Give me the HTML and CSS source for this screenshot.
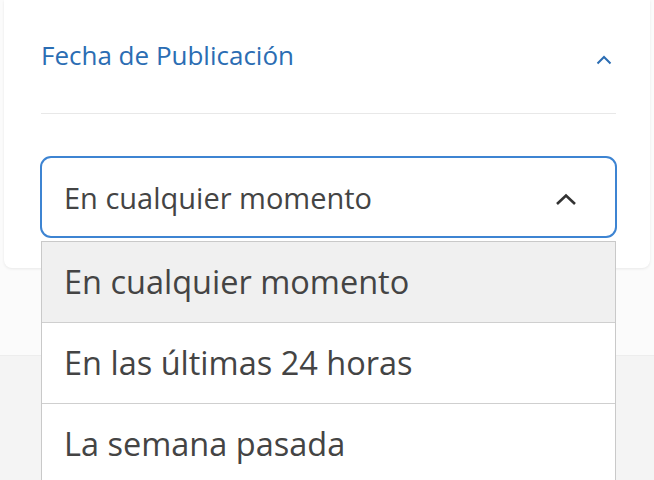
FILE: index.html
```html
<!DOCTYPE html>
<html lang="es">
<head>
    <meta charset="UTF-8">
    <meta name="viewport" content="width=device-width, initial-scale=1.0">
    <title>Filtros</title>
    <link rel="stylesheet" href="styles.css">
</head>
<body>
    <div class="card">
        <div class="card-header">
            <span class="card-title">Fecha de Publicación</span>
            <svg class="chevron chevron-blue" width="16" height="10" viewBox="0 0 16 10">
                <path d="M1.5 8.5 L8 2 L14.5 8.5" fill="none" stroke="currentColor" stroke-width="2"/>
            </svg>
        </div>
        <div class="select-wrap">
            <div class="select">
                <span>En cualquier momento</span>
                <svg class="chevron chevron-dark" width="22" height="13" viewBox="0 0 22 13">
                    <path d="M2 11 L11 2.5 L20 11" fill="none" stroke="currentColor" stroke-width="2.6"/>
                </svg>
            </div>
            <ul class="options">
                <li class="active">En cualquier momento</li>
                <li>En las últimas 24 horas</li>
                <li>La semana pasada</li>
            </ul>
        </div>
    </div>
    <div class="spacer"></div>
    <div class="footer"></div>
</body>
</html>
```

FILE: styles.css
```css
* {
    box-sizing: border-box;
}

html {
    overflow: hidden;
}

body {
    margin: 0;
    background: #fbfbfb;
    font-family: "Open Sans", Lato, "Noto Sans", sans-serif;
    color: #444;
}

.card {
    margin: 0 4px;
    padding: 0 33px 30px 36px;
    background: #fff;
    border-radius: 0 0 8px 8px;
    box-shadow: 0 1px 3px rgba(0, 0, 0, 0.08);
}

.card-header {
    height: 114px;
    margin: 0 1px 42px;
    display: flex;
    align-items: center;
    justify-content: space-between;
    border-bottom: 1px solid #e8e8e8;
    padding-bottom: 4px;
}

.card-title {
    font-size: 26px;
    color: #2b6db3;
}

.chevron-blue {
    color: #2b6db3;
    margin-right: 4px;
    margin-top: 10px;
}

.select-wrap {
    position: relative;
}

.select {
    height: 82px;
    display: flex;
    align-items: center;
    justify-content: space-between;
    padding: 0 38px 0 22px;
    border: 2px solid #3d84d2;
    border-radius: 11px;
    font-size: 29px;
}

.chevron-dark {
    color: #333;
    margin-top: 4px;
}

.options {
    position: absolute;
    top: 85px;
    left: 1px;
    right: 1px;
    margin: 0;
    padding: 0;
    list-style: none;
    background: #fff;
    border: 1px solid #c9c9c9;
    border-bottom: none;
}

.options li {
    height: 81px;
    display: flex;
    align-items: center;
    padding: 0 22px;
    padding-bottom: 2px;
    font-size: 32.5px;
    border-bottom: 1px solid #cfcfcf;
}

.options li.active {
    background: #f0f0f0;
}

.spacer {
    height: 87px;
}

.footer {
    height: 200px;
    background: #f4f4f4;
    border-top: 1px solid #ededed;
}
```
